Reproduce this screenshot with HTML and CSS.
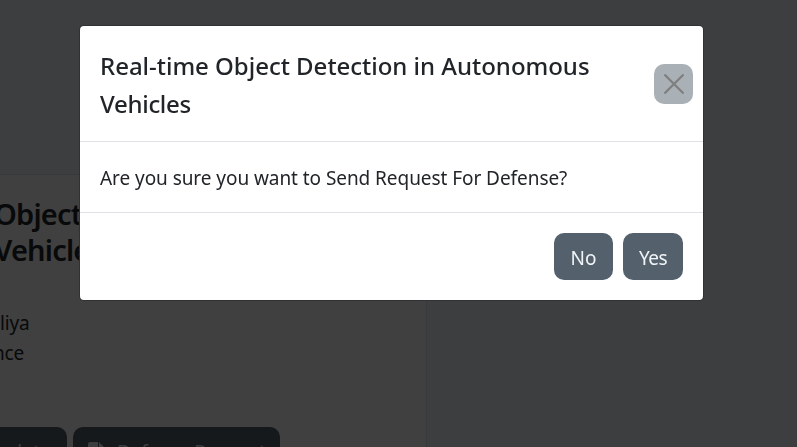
FILE: index.html
```html
<!DOCTYPE html>
<html lang="en">
<head>
<meta charset="utf-8">
<title>Defense Request</title>
<link rel="stylesheet" href="styles.css">
</head>
<body>
<main class="page">
  <section class="card">
    <h2 class="card-title">Object<br>Vehicles</h2>
    <div class="card-text"><p>liya</p><p>nce</p></div>
    <div class="card-actions">
      <button class="card-btn update">Update</button>
      <button class="card-btn request">
        <svg class="file-icon" viewBox="0 0 23 20"><path d="M2 0h8v6h5v14H2a2 2 0 0 1-2-2V2a2 2 0 0 1 2-2zM11 0l5 5h-5zM19 4l2 3-2 3z"/></svg>
        <span>Defense Request</span>
      </button>
    </div>
  </section>
</main>
<div class="overlay">
  <div class="modal" role="dialog">
    <header class="modal-header">
      <h1 class="modal-title">Real-time Object Detection in Autonomous<br><span class="tight">Vehicles</span></h1>
      <button class="close" aria-label="Close">
        <svg viewBox="0 0 20 20"><path d="M1.2 1.2l17.6 17.6M18.8 1.2L1.2 18.8"/></svg>
      </button>
    </header>
    <div class="modal-body"><span>Are you sure you want to Send Request For Defense?</span></div>
    <footer class="modal-footer">
      <button class="btn no">No</button>
      <button class="btn yes">Yes</button>
    </footer>
  </div>
</div>
</body>
</html>
```
FILE: styles.css
```css
* { box-sizing: border-box; margin: 0; }
body {
  width: 797px;
  height: 447px;
  overflow: hidden;
  background: #3d3e40;
  font-family: "Segoe UI", "Noto Sans", sans-serif;
  color: #212529;
}
button { border: 0; padding: 0; font: inherit; }
.page { height: 447px; padding-top: 174px; overflow: hidden; }
.card {
  width: 427px;
  height: 330px;
  padding-top: 21px;
  background: #404040;
  border-top: 1px solid #38393b;
  border-right: 1px solid #38393b;
  color: #08090a;
}
.card-title {
  margin-left: -6px;
  font-size: 29px;
  font-weight: 600;
  line-height: 36px;
  letter-spacing: -0.8px;
}
.card-text { margin-top: 40px; font-size: 19px; line-height: 30px; letter-spacing: -0.2px; }
.card-text p + p { margin-left: -7px; }
.card-actions { display: flex; gap: 6px; margin-top: 59px; }
.card-btn {
  display: flex;
  align-items: center;
  height: 47px;
  padding-top: 2px;
  border-radius: 10px;
  background: #15191c;
  color: #3b3d3f;
  font-size: 19px;
}
.card-btn.update { width: 117px; margin-left: -50px; padding-left: 35px; }
.card-btn.request { width: 207px; padding-left: 15px; gap: 6px; }
.card-btn.request span { letter-spacing: -0.15px; white-space: nowrap; }
.file-icon { width: 23px; height: 20px; fill: #3b3d3f; }
.overlay { position: fixed; inset: 0; padding: 26px 0 0 80px; }
.modal {
  width: 623px;
  height: 274px;
  background: #fff;
  border-radius: 4px;
  box-shadow: 0 0 0 1px #303133;
}
.modal-header {
  display: flex;
  align-items: center;
  justify-content: space-between;
  height: 116px;
  padding: 0 10px 0 20px;
  border-bottom: 1px solid #dee2e6;
}
.modal-title {
  padding-top: 2px;
  font-size: 24px;
  font-weight: 500;
  line-height: 38px;
  letter-spacing: -0.02px;
  white-space: nowrap;
}
.tight { letter-spacing: -0.3px; }
.close {
  display: flex;
  align-items: center;
  justify-content: center;
  width: 39px;
  height: 40px;
  border-radius: 10px;
  background: #a9b0b6;
}
.close svg { width: 20px; height: 20px; fill: none; stroke: #7f7f7f; stroke-width: 2.3; stroke-linecap: round; }
.modal-body {
  height: 71px;
  padding: 21px 20px 19px;
  border-bottom: 1px solid #dee2e6;
  font-size: 19px;
  line-height: 30px;
  letter-spacing: -0.06px;
  white-space: nowrap;
}
.modal-footer { display: flex; justify-content: flex-end; gap: 10px; padding: 20px; }
.btn { height: 47px; padding-top: 2px; border-radius: 10px; background: #54616c; color: #f1f4f6; font-size: 19px; }
.btn.no { width: 59px; }
.btn.yes { width: 60px; letter-spacing: -0.6px; }
```
